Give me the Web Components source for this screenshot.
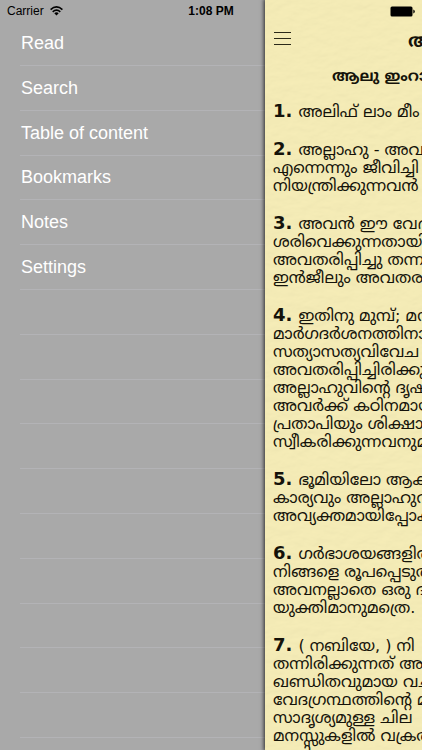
<!DOCTYPE html>
<html lang="ml">
<head>
<meta charset="utf-8">
<meta name="viewport" content="width=device-width, initial-scale=1">
<title>Reader</title>
<style>
html, body {
  height: 100%;
  margin: 0;
}
body {
  font-family: "Liberation Sans", Arial, sans-serif;
  overflow:    hidden;
}
</style>
</head>
<body>
<app-shell>
  <status-bar slot="status" carrier="Carrier" time="1:08 PM"></status-bar>
  <side-menu slot="menu" rows="17">
    <menu-item>Read</menu-item>
    <menu-item>Search</menu-item>
    <menu-item>Table of content</menu-item>
    <menu-item>Bookmarks</menu-item>
    <menu-item>Notes</menu-item>
    <menu-item>Settings</menu-item>
  </side-menu>
  <reader-page>
    <span slot="title">ആലു</span>
    <span slot="chapter">ആലു ഇംറാ</span>
    <verse-block number="1">അലിഫ് ലാം മീം</verse-block>
    <verse-block number="2">അല്ലാഹു - അവ<br>
      എന്നെന്നും ജീവിച്ചി<br>
      നിയന്ത്രിക്കുന്നവൻ</verse-block>
    <verse-block number="3">അവൻ ഈ വേദ<br>
      ശരിവെക്കുന്നതായി<br>
      അവതരിപ്പിച്ചു തന്ന<br>
      ഇൻജീലും അവതര</verse-block>
    <verse-block number="4">ഇതിനു മുമ്പ്; മന<br>
      മാർഗദർശനത്തിനാ<br>
      സത്യാസത്യവിവേച<br>
      അവതരിപ്പിച്ചിരിക്കു<br>
      അല്ലാഹുവിന്റെ ദൃഷ്<br>
      അവർക്ക് കഠിനമായ<br>
      പ്രതാപിയും ശിക്ഷാ<br>
      സ്വീകരിക്കുന്നവനുമ</verse-block>
    <verse-block number="5">ഭൂമിയിലോ ആക<br>
      കാര്യവും അല്ലാഹുവ<br>
      അവ്യക്തമായിപ്പോക</verse-block>
    <verse-block number="6">ഗർഭാശയങ്ങളിൽ<br>
      നിങ്ങളെ രൂപപ്പെടുത<br>
      അവനല്ലാതെ ഒരു ദ<br>
      യുക്തിമാനുമത്രെ.</verse-block>
    <verse-block number="7">( നബിയേ, ) നി<br>
      തന്നിരിക്കുന്നത് അവ<br>
      ഖണ്ഡിതവുമായ വച<br>
      വേദഗ്രന്ഥത്തിന്റെ മൂ<br>
      സാദൃശ്യമുള്ള ചില<br>
      മനസ്സുകളിൽ വക്രത<br>
      തേടിക്കൊണ്ടും</verse-block>
  </reader-page>
</app-shell>

<script>
class BaseElement extends HTMLElement {
  constructor() {
    super()
    this.attachShadow({mode: 'open'})
    const template = document.createElement('template')
    template.innerHTML = this.constructor.html
    this.shadowRoot.append(template.content.cloneNode(true))
  }
  $(selector) {
    return this.shadowRoot.querySelector(selector)
  }
}

class AppShell extends BaseElement {
  static html = `
<style>
:host {
  display:    flex;
  position:   relative;
  height:     100vh;
  overflow:   hidden;
  background: #a9a9a9;
}
::slotted(side-menu) {
  flex: 0 0 265px;
}
::slotted(reader-page) {
  flex:      1;
  min-width: 0;
}
/* the status bar floats over both panes */
::slotted(status-bar) {
  position: absolute;
  top:      0;
  left:     0;
  right:    0;
  z-index:  2;
}
</style>
<slot name="status"></slot>
<slot name="menu"></slot>
<slot></slot>
`
}

class StatusBar extends BaseElement {
  static html = `
<style>
:host {
  display:               grid;
  grid-template-columns: 1fr auto 1fr;
  align-items:           center;
  height:                22px;
  padding:               0 7px;
  font-size:             12px;
  color:                 black;
  pointer-events:        none;
  box-sizing:            border-box;
}
.left {
  display:     flex;
  align-items: center;
  gap:         6px;
}
.time {
  font-weight: bold;
}
.battery {
  justify-self: end;
}
svg {
  display: block;
}
</style>
<div class="left">
  <span class="carrier"></span>
  <svg width="13" height="10" viewBox="0 0 13 10" fill="none" stroke="#000" stroke-width="1.6">
    <path d="M.6 3.6Q6.5-1.8 12.4 3.6M2.7 5.8Q6.5 2.4 10.3 5.8"/>
    <path d="M4.3 7.2Q6.5 5.4 8.7 7.2L6.5 9.6Z" fill="#000" stroke="none"/>
  </svg>
</div>
<span class="time"></span>
<svg class="battery" width="25" height="11" viewBox="0 0 25 11">
  <rect x=".5" y=".5" width="22" height="10" rx="1.5" fill="#000"/>
  <path d="M23.3 3.5Q24.8 4 24.8 5.500T23.3 7.5Z"/>
</svg>
`
  connectedCallback() {
    this.$('.carrier').textContent = this.getAttribute('carrier')
    this.$('.time').textContent    = this.getAttribute('time')
  }
}

class SideMenu extends BaseElement {
  static html = `
<style>
:host {
  display:    block;
  overflow:   hidden;
  box-sizing: border-box;
  padding:    21px 0 0 20px;
}
nav {
  display:        flex;
  flex-direction: column;
}
.row, ::slotted(menu-item) {
  flex:          none;
  height:        45px;
  box-sizing:    border-box;
  border-bottom: 1px solid #b3b3b6;
}
::slotted(menu-item:nth-child(5n+4)), .row:nth-of-type(5n+3) {
  height: 44px;
}
</style>
<nav><slot></slot></nav>
`
  connectedCallback() {
    // fill the rest of the list with empty rows
    const nav   = this.$('nav')
    const count = Number(this.getAttribute('rows')) - this.querySelectorAll('menu-item').length
    for(let i = 0; i < count; i++) {
      const row = document.createElement('div')
      row.className = 'row'
      nav.append(row)
    }
  }
}

class MenuItem extends BaseElement {
  static html = `
<style>
:host {
  display: block;
}
button {
  width:      100%;
  height:     100%;
  padding:    0 1px;
  border:     none;
  background: none;
  color:      white;
  font:       inherit;
  font-size:  18px;
  text-align: left;
}
</style>
<button type="button"><slot></slot></button>
`
}

class ReaderPage extends BaseElement {
  static html = `
<style>
:host {
  display:     block;
  position:    relative;
  background:  #f3eab5;
  box-shadow:  0 0 4px 1px rgba(0, 0, 0, 0.75);
  color:       #15130a;
  font-family: "DejaVu Sans", "Noto Sans Malayalam", "Noto Sans", sans-serif;
}
.paper {
  position: absolute;
  inset:    0;
  width:    100%;
  height:   100%;
  opacity:  0.25;
}
.page {
  position:   relative;
  height:     100%;
  overflow:   hidden;
  box-sizing: border-box;
  padding:    20px 0 0 8px;
}
header {
  display:     flex;
  align-items: center;
  height:      36px;
  gap:         116px;
}
button {
  flex:       none;
  padding:    0 1px;
  border:     none;
  background: none;
}
button svg {
  display: block;
}
h1, h2 {
  margin:      0;
  font-weight: bold;
  white-space: nowrap;
}
h1 {
  font-size:   18px;
  line-height: 30px;
  padding-top: 6px;
}
h2 {
  padding-left: 59px;
  font-size:    15px;
  line-height:  40px;
}
.verses {
  display:        flex;
  flex-direction: column;
  gap:            19px;
  padding-top:    6px;
}
</style>
<svg class="paper" aria-hidden="true">
  <filter id="grain" x="0" y="0" width="100%" height="100%">
    <feTurbulence type="fractalNoise" baseFrequency="0.07 0.12" numOctaves="3" seed="4"/>
    <feDiffuseLighting surfaceScale="0.6" diffuseConstant="1.18" lighting-color="#f6edb8">
      <feDistantLight azimuth="70" elevation="58"/>
    </feDiffuseLighting>
  </filter>
  <rect width="100%" height="100%" filter="url(#grain)"/>
</svg>
<div class="page">
  <header>
    <button type="button" aria-label="Menu">
      <svg width="17" height="15" viewBox="0 0 17 15" stroke="#2b2918" stroke-width="1">
        <path d="M0 1.5H17M0 7.5H17M0 13.5H17"/>
      </svg>
    </button>
    <h1><slot name="title"></slot></h1>
  </header>
  <h2><slot name="chapter"></slot></h2>
  <div class="verses"><slot></slot></div>
</div>
`
}

class VerseBlock extends BaseElement {
  static html = `
<style>
:host {
  display:     block;
  font-size:   16px;
  line-height: 18px;
  white-space: nowrap;
}
p {
  margin: 0;
}
strong {
  font-size:    18px;
  margin-right: 1px;
}
</style>
<p><strong></strong> <slot></slot></p>
`
  connectedCallback() {
    this.$('strong').textContent = this.getAttribute('number') + '.'
  }
}

customElements.define('app-shell', AppShell)
customElements.define('status-bar', StatusBar)
customElements.define('side-menu', SideMenu)
customElements.define('menu-item', MenuItem)
customElements.define('reader-page', ReaderPage)
customElements.define('verse-block', VerseBlock)
</script>
</body>
</html>
